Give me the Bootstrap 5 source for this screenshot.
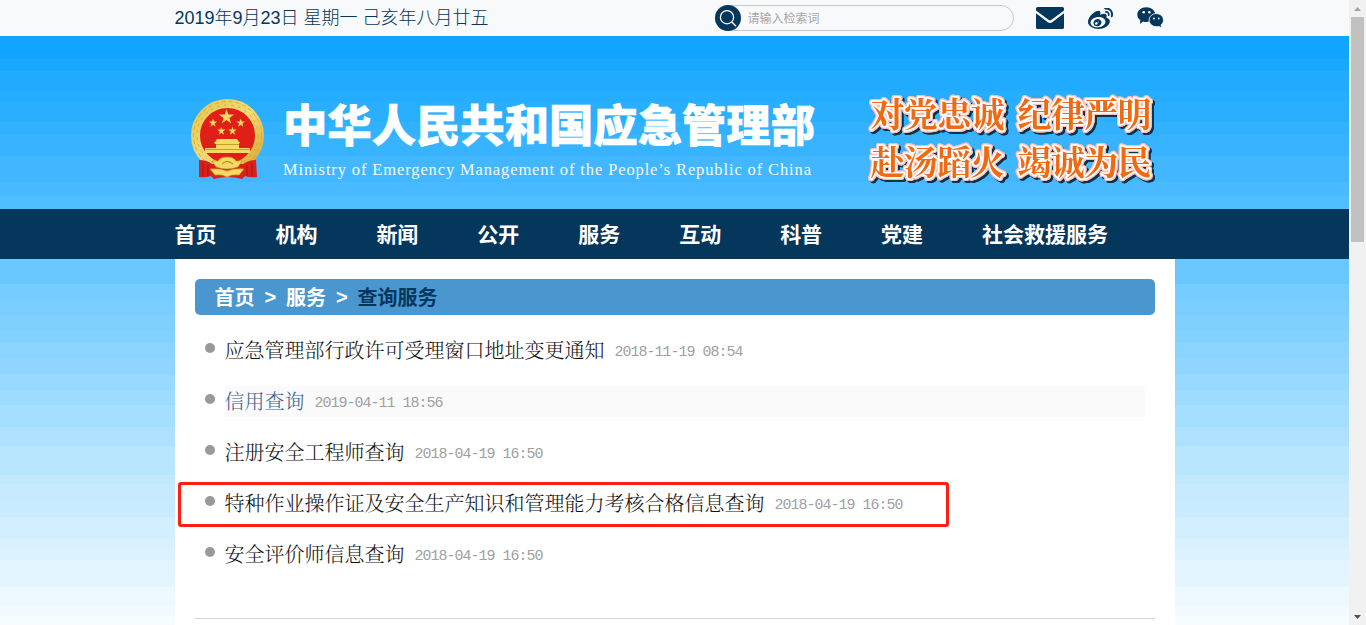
<!DOCTYPE html>
<html lang="zh-CN">
<head>
<meta charset="utf-8">
<meta name="viewport" content="width=device-width, initial-scale=1">
<title>查询服务 - 中华人民共和国应急管理部</title>
<link href="https://cdn.jsdelivr.net/npm/bootstrap@5.3.0/dist/css/bootstrap.min.css" rel="stylesheet">
<style>
  html, body { height: 625px; overflow: hidden; }
  body { font-family: "Liberation Sans", "Noto Sans CJK SC", sans-serif; color: #111; }
  a { text-decoration: none; color: inherit; }
  .page-view { height: 625px; overflow: hidden;
    background: linear-gradient(#12a5ff 0 59px, #19a8ff 0 71px, #20abff 0 91px, #25adff 0 102px, #2aafff 0 122px, #32b1ff 0 135px, #37b3ff 0 156px, #42b7ff 0 182px, #49baff 0 196px, #51bfff 0 230px, #69c7ff 0 284px, #74ccff 0 300px, #79cdff 0 315px, #7fd0ff 0 330px, #84d1ff 0 342px, #8bd4ff 0 358px, #8fd5ff 0 374px, #97d9ff 0 391px, #9edcff 0 405px, #a5dfff 0 427px, #aee1ff 0 446px, #b8e6ff 0 475px, #c1e8ff 0 484px, #c7eaff 0 500px, #caebff 0 517px, #d1efff 0 539px, #d8f0ff 0 548px, #ddf2ff 0 560px, #e1f4ff 0 577px, #e5f5ff 0 587px, #eef9ff 0 606px, #f2faff 0 616px, #f7fcff 0); }
  .wrap { width: 1000px; margin: 0 auto; }
  .topbar { height: 36px; background: #f7f9fb; color: #05365c; }
  .today { font-size: 18px; line-height: 36px; white-space: pre; font-weight: 300; }
  .searchbox { width: 299px; height: 26px; border: 1px solid #c5c9ce; border-radius: 13px; margin-right: 22px; }
  .searchbox .go { width: 26px; height: 26px; margin: -1px 0 0 -1px; border-radius: 50%; background: #05365c; }
  .searchbox input { border: 0; outline: 0; background: none; font-size: 12px; width: 240px; padding: 1px 0 0 7px; height: 22px; }
  .searchbox input::placeholder { color: #a6a6a6; opacity: 1; }
  .masthead { height: 173px; }
  .masthead svg { display: block; }
  .slogan { filter: drop-shadow(1px 0 0 #f9bdb8) drop-shadow(-1px 0 0 #f9bdb8) drop-shadow(0 1px 0 #f9bdb8) drop-shadow(0 -1px 0 #f9bdb8) drop-shadow(2.5px 2.5px 0 #0d334c); }
  .mainnav { height: 50px; background: #05365c; }
  .mainnav a { color: #fff; font-size: 21px; font-weight: 700; line-height: 52px; height: 50px; margin-right: 58.95px; }
  .sheet { height: 366px; background: #fff; padding: 20px 20px 0; }
  .crumbs { height: 36px; border-radius: 5px; background: #4a97d0; color: #fff; font-size: 20px; font-weight: 700; line-height: 38px; padding-left: 20px; }
  .crumbs i { font-style: normal; width: 31.5px; text-align: center; line-height: 36px; }
  .crumbs .here { color: #05365c; }
  .news { margin: 20px 10px 0 10px; padding: 0; list-style: none; height: 283px; }
  .news li { height: 31px; margin-bottom: 20px; }
  .news .dot { width: 10px; height: 10px; border-radius: 50%; background: #999; margin: 8px 10px 0 0; }
  .news .line { font-family: "Noto Serif CJK SC", "Noto Sans CJK SC", serif; line-height: 29px; font-size: 20px; font-weight: 300; height: 31px; }
  .news .hov { background: #fafafa; color: #3f6290; }
  .news time { font-family: "Liberation Mono", monospace; font-size: 15px; letter-spacing: -1px; color: #a0a0a0; margin-left: 10px; padding-top: 3px; }
  .marker { left: -27px; top: -6px; width: 771px; height: 45px; border: 3px solid #ff1e12; border-radius: 3px; }
  .endline { height: 1px; background: #d6d6d6; }
  .sbar { width: 17px; background: #f1f1f1; }
  .sbar .thumb { width: 13px; height: 225px; background: #c1c1c1; }
</style>
</head>
<body>
<div class="d-flex page-frame">
  <div class="page-view flex-grow-1">
    <div class="topbar">
      <div class="wrap d-flex align-items-center h-100">
        <div class="today me-auto">2019年9月23日 星期一 己亥年八月廿五</div>
        <form class="searchbox d-flex align-items-center">
          <span class="go flex-shrink-0"><svg class="d-block" width="26" height="26" fill="none" stroke="#fff" stroke-width="1.3"><circle cx="12" cy="12.2" r="6.6"/><path d="M16.8 17l4.2 4.3"/></svg></span>
          <input type="text" placeholder="请输入检索词">
        </form>
        <svg width="28" height="22" viewBox="0 0 28 22" fill="#05365c"><path d="M1.500 0h25q1.500 0 1.500 1.500V3.500L15.500 12.800q-1.500 1-3 0L0 3.500V1.500Q0 0 1.500 0zM0 6.200l11.800 9q2.200 1.500 4.400 0L28 6.200V20.500q0 1.500-1.500 1.500h-25Q0 22 0 20.500z"/></svg>
        <svg class="ms-4" width="25" height="21" viewBox="0 190 1792 1440" preserveAspectRatio="none" fill="#05365c"><path d="M675 1284q21-34 11-69t-45-50q-34-14-73-1t-60 46q-22 34-13 68.500t43 50.500 74.500 2.500 62.500-47.500zM769 1163q8-13 3.500-26.500t-17.500-18.500q-14-5-28.500.5t-21.500 18.500q-17 31 13 45 14 5 29-.5t22-18.500zM943 1270q-45 102-158 150t-224 12q-107-34-147.500-126.500t6.500-187.500q47-93 151.500-139t210.500-19q111 29 158.500 119.500t2.500 190.500zM1255 1110q-9-96-89-170t-208.500-109-274.500-21q-223 23-369.500 141.500t-132.500 264.500q9 96 89 170t208.500 109 274.500 21q223-23 369.500-141.500t132.500-264.500zM1563 1114q0 68-37 139.500t-109 137-168.500 117.500-226 83-270.500 31-275-33.500-240.500-93-171.500-151-65-199.500q0-115 69.500-245t197.500-258q169-169 341.500-236t246.500 7q65 64 20 209-4 14-1 20t10 7 14.500-.5 13.500-3.500l6-2q139-59 246-59t153 61q45 63 0 178-2 13-4.500 20t4.500 12.500 12 7.500 17 6q57 18 103 47t80 81.500 34 116.500zM1489 474q42 47 54.500 108.500t-6.500 117.500q-8 23-29.500 34t-44.500 4q-23-8-34-29.500t-4-44.500q20-63-24-111t-107-35q-24 5-45-8t-25-37q-5-24 8-44.500t37-25.500q60-13 119 5.500t101 65.500zM1670 311q87 96 112.500 222.500t-13.500 241.500q-9 27-34 40t-52 4-40-34-5-52q28-82 10-172t-80-158q-62-69-148-95.500t-173-8.500q-28 6-52-9.500t-30-43.500 9.500-51.500 43.500-29.500q123-26 244 11.500t208 134.500z"/></svg>
        <svg style="margin:0 11px 0 24px" width="27" height="22" viewBox="0 0 27 22" fill="#05365c">
          <path d="M9.300.3c5 0 9 3.300 9 7.300s-4 7.300-9 7.300q-1.800 0-3.200-.5L3 17l.3-3.800C1.400 11.900.3 9.900.3 7.600c0-4 4-7.300 9-7.300z"/>
          <path d="M19.300 6.600c4 0 7.200 2.900 7.200 6.500 0 1.900-.9 3.600-2.400 4.800l.5 3.200-2.700-1.700q-1.200.3-2.600.3c-4 0-7.200-2.900-7.200-6.600s3.200-6.500 7.200-6.500z" stroke="#f7f9fb" stroke-width=".9"/>
          <g fill="#fff"><circle cx="6.700" cy="5.300" r="1.300"/><circle cx="12.300" cy="5.300" r="1.300"/><circle cx="16.900" cy="11.500" r=".9"/><circle cx="21.700" cy="11.500" r=".9"/></g>
        </svg>
      </div>
    </div>

    <header class="masthead wrap">
      <svg width="1000" height="173" viewBox="175 36 1000 173">
        <defs>
          <linearGradient id="gold" x1="0" y1="0" x2="1" y2="1"><stop offset="0" stop-color="#e9c64e"/><stop offset=".5" stop-color="#f2dc78"/><stop offset="1" stop-color="#d9a92c"/></linearGradient>
          <path id="star" d="M0-1L.225-.309.951-.309.363.118.588.809 0 .382-.588.809-.363.118-.951-.309-.225-.309z"/>
        </defs>
        <!-- national emblem -->
        <circle cx="227.500" cy="135.500" r="32" fill="#df2019" stroke="url(#gold)" stroke-width="9"/>
        <circle cx="227.500" cy="135.500" r="34" fill="none" stroke="#cfa235" stroke-width=".8" stroke-dasharray="4 3"/>
        <circle cx="227.500" cy="135.500" r="30.500" fill="none" stroke="#c99c30" stroke-width=".7" stroke-dasharray="3 4"/>
        <path d="M199 160q8 0 13 4h31q6-4 13-4l1 17q-8 1-12-1l-3 3q-7-2-14-2t-14 2l-3-3q-5 2-12 1z" fill="#dc1f1b"/>
        <path d="M203 163v13M208 165v11M247 165v11M252 163v13" stroke="#9d1a16" stroke-width="1"/>
        <g fill="#f4da62">
          <use href="#star" transform="translate(226.500 117) scale(8)"/>
          <use href="#star" transform="translate(213 123) scale(4.500)"/>
          <use href="#star" transform="translate(240.700 123) scale(4.500)"/>
          <use href="#star" transform="translate(221.300 131) scale(4.500)"/>
          <use href="#star" transform="translate(232.500 131) scale(4.500)"/>
          <path d="M217 139h20l2 3h-24zM214 142h26l-1 2h-24zM216 144h23v4h-23zM205 148h45v5h-45z"/>
          <path d="M218 161q2-4 9-4t9 4l6 0-4 6q-11 4-22 0l-4-6z" stroke="#b98a20" stroke-width=".6"/>
          <path d="M210 169q10-1 17 2 7-3 17-2l-5 6q-7-1-12 2-5-3-12-2z" stroke="#c79a2c" stroke-width=".6"/>
        </g>
        <path d="M216 144.500h23M206 149.500h43" stroke="#bd8c25" stroke-width=".8"/>
        <path d="M222 164q5-5 11 0" fill="none" stroke="#a9781a" stroke-width="1"/>
        <text x="283" y="142" fill="#fff" stroke="#fff" stroke-width=".6" font-family="'Noto Sans CJK SC', sans-serif" font-weight="900" font-size="44.300" textLength="532">中华人民共和国应急管理部</text>
        <text x="283" y="175" fill="#f3faff" font-family="'Liberation Serif', serif" font-size="16.500" textLength="528">Ministry of Emergency Management of the People’s Republic of China</text>
        <g class="slogan" font-family="'Noto Serif CJK SC', 'Noto Sans CJK SC', serif" font-weight="700" font-size="34" fill="#f06a14" stroke="#fff" stroke-width="3.500" stroke-linejoin="round" paint-order="stroke">
          <text x="870.500" y="126.500" textLength="134">对党忠诚</text><text x="1017.500" y="126.500" textLength="134">纪律严明</text>
          <text x="870.500" y="175" textLength="134">赴汤蹈火</text><text x="1017.500" y="175" textLength="134">竭诚为民</text>
        </g>
      </svg>
    </header>

    <nav class="mainnav">
      <div class="wrap d-flex text-nowrap">
        <a href="#">首页</a><a href="#">机构</a><a href="#">新闻</a><a href="#">公开</a><a href="#">服务</a><a href="#">互动</a><a href="#">科普</a><a href="#">党建</a><a href="#" class="me-0">社会救援服务</a>
      </div>
    </nav>

    <main class="wrap sheet">
      <div class="crumbs d-flex"><a href="#">首页</a><i>&gt;</i><a href="#">服务</a><i>&gt;</i><span class="here">查询服务</span></div>
      <ul class="news">
        <li class="d-flex"><span class="dot"></span><div class="line d-flex flex-grow-1"><a href="#">应急管理部行政许可受理窗口地址变更通知</a><time>2018-11-19 08:54</time></div></li>
        <li class="d-flex"><span class="dot"></span><div class="line hov d-flex flex-grow-1"><a href="#">信用查询</a><time>2019-04-11 18:56</time></div></li>
        <li class="d-flex"><span class="dot"></span><div class="line d-flex flex-grow-1"><a href="#">注册安全工程师查询</a><time>2018-04-19 16:50</time></div></li>
        <li class="d-flex position-relative"><span class="dot"></span><div class="line d-flex flex-grow-1"><a href="#">特种作业操作证及安全生产知识和管理能力考核合格信息查询</a><time>2018-04-19 16:50</time></div><span class="marker position-absolute"></span></li>
        <li class="d-flex"><span class="dot"></span><div class="line d-flex flex-grow-1"><a href="#">安全评价师信息查询</a><time>2018-04-19 16:50</time></div></li>
      </ul>
      <div class="endline"></div>
    </main>
  </div>

  <div class="sbar d-flex flex-column align-items-center flex-shrink-0">
    <svg class="d-block" width="17" height="17"><path d="M5 11l3.500-4 3.500 4z" fill="#a3a3a3"/></svg>
    <div class="thumb"></div>
    <svg class="d-block mt-auto" width="17" height="17"><path d="M5 7l3.500 4 3.500-4z" fill="#505050"/></svg>
  </div>
</div>
<script src="https://cdn.jsdelivr.net/npm/bootstrap@5.3.0/dist/js/bootstrap.bundle.min.js"></script>
</body>
</html>
